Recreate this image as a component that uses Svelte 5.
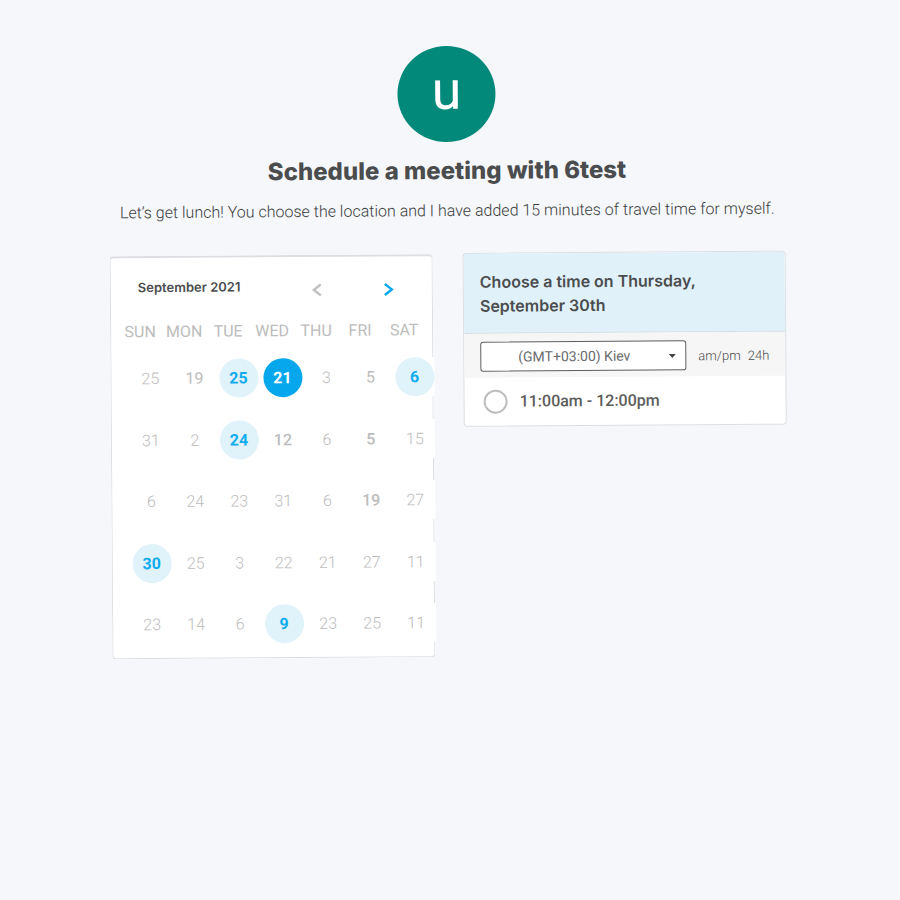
<script>
  const dayNames = ['SUN', 'MON', 'TUE', 'WED', 'THU', 'FRI', 'SAT'];
  // kind: open = bookable, picked = selected, mid / strong = darker disabled days
  const weeks = [
    [{ n: 25 }, { n: 19, kind: 'mid' }, { n: 25, kind: 'open' }, { n: 21, kind: 'picked' }, { n: 3 }, { n: 5, kind: 'mid' }, { n: 6, kind: 'open' }],
    [{ n: 31 }, { n: 2 }, { n: 24, kind: 'open' }, { n: 12, kind: 'strong' }, { n: 6 }, { n: 5, kind: 'strong' }, { n: 15 }],
    [{ n: 6 }, { n: 24 }, { n: 23 }, { n: 31 }, { n: 6 }, { n: 19, kind: 'strong' }, { n: 27 }],
    [{ n: 30, kind: 'open' }, { n: 25 }, { n: 3 }, { n: 22 }, { n: 21 }, { n: 27 }, { n: 11 }],
    [{ n: 23 }, { n: 14 }, { n: 6 }, { n: 9, kind: 'open' }, { n: 23 }, { n: 25 }, { n: 11 }]
  ];
</script>

<main>
  <header>
    <div class="avatar">u</div>
    <h1>Schedule a meeting with 6test</h1>
    <p>Let’s get lunch! You choose the location and I have added 15 minutes of travel time for myself.</p>
  </header>

  <div class="columns">
    <section class="card calendar">
      <div class="month">
        <h2>September 2021</h2>
        <div class="arrows">
          <button type="button" class="prev" aria-label="Previous month">
            <svg width="12" height="14" viewBox="0 0 12 14"><path d="M10 1.5 3 7l7 5.5" /></svg>
          </button>
          <button type="button" class="next" aria-label="Next month">
            <svg width="12" height="14" viewBox="0 0 12 14"><path d="M2 1.5 9 7l-7 5.5" /></svg>
          </button>
        </div>
      </div>
      <table>
        <thead>
          <tr>{#each dayNames as name}<th scope="col">{name}</th>{/each}</tr>
        </thead>
        <tbody>
          {#each weeks as week}
            <tr>
              {#each week as day}
                <td>
                  <button type="button" class="day {day.kind ?? ''}"><span>{day.n}</span></button>
                </td>
              {/each}
            </tr>
          {/each}
        </tbody>
      </table>
    </section>

    <section class="card times">
      <h2>Choose a time on Thursday, September 30th</h2>
      <div class="zone">
        <div class="picker">
          <select aria-label="Time zone">
            <option>(GMT+03:00) Kiev</option>
          </select>
          <svg width="8" height="5" viewBox="0 0 8 5"><path d="M0.5 0.5h7L4 4.5z" /></svg>
        </div>
        <div class="formats">
          <button type="button">am/pm</button>
          <button type="button">24h</button>
        </div>
      </div>
      <label class="slot">
        <input type="radio" name="slot" />
        <span>11:00am - 12:00pm</span>
      </label>
    </section>
  </div>
</main>

<style>
  :global(body) {
    background: #f5f7fb;
  }

  main {
    box-sizing: border-box;
    max-width: 676px;
    margin: 0 auto;
    padding: 46px 0;
    font-family: Roboto, sans-serif;
    color: #4a4c4e;
    transform: rotate(-0.4deg);
    transform-origin: 50% 600px;
  }

  button {
    padding: 0;
    border: 0;
    background: none;
    font: inherit;
    color: inherit;
    cursor: pointer;
  }

  h1,
  h2,
  p {
    margin: 0;
  }

  header {
    display: flex;
    flex-direction: column;
    align-items: center;
    text-align: center;
  }

  .avatar {
    width: 98px;
    height: 96px;
    border-radius: 50%;
    background: #03897a;
    color: #fff;
    font-size: 54px;
    line-height: 90px;
  }

  h1 {
    margin-top: 14px;
    font: 800 24px/30px Inter, sans-serif;
  }

  p {
    margin-top: 13px;
    font-size: 16px;
    font-weight: 300;
    line-height: 24px;
    color: #3c3e40;
  }

  .columns {
    display: grid;
    grid-template-columns: 1fr 1fr;
    align-items: start;
    gap: 30px;
    margin-top: 30px;
  }

  .card {
    box-sizing: border-box;
    min-width: 0;
    border: 1px solid #dcdfe2;
    border-radius: 4px;
    background: #fff;
  }

  .calendar {
    margin-top: 1px;
    padding: 19px 0 14px;
    border-top: 2px solid #dcdee1;
  }

  .month {
    display: flex;
    align-items: flex-start;
    justify-content: space-between;
    padding: 0 37px 0 27px;
  }

  .month h2 {
    font: 600 13px/20px Inter, sans-serif;
  }

  .arrows {
    display: flex;
    gap: 60px;
    padding-top: 7px;
  }

  .arrows button {
    display: flex;
  }

  .arrows path {
    fill: none;
    stroke: #bfbfbf;
    stroke-width: 2.4;
  }

  .arrows .next path {
    stroke: #06a7ec;
  }

  table,
  thead,
  tbody {
    display: block;
  }

  table {
    margin-top: 24px;
  }

  tr {
    display: flex;
  }

  thead {
    margin-left: 7px;
  }

  th,
  td {
    flex: none;
    display: flex;
    justify-content: center;
    width: 44px;
    padding: 0;
  }

  th {
    font-size: 16px;
    font-weight: 400;
    line-height: 20px;
    color: #bdbdbd;
  }

  tbody {
    display: flex;
    flex-direction: column;
    justify-content: space-between;
    height: 285px;
    margin: 17px 0 0 17px;
  }

  .day {
    width: 39px;
    height: 39px;
    background: #fff;
    font-size: 16px;
    font-weight: 300;
    line-height: 39px;
    color: #bcbcbc;
  }

  .day span {
    display: block;
    border-radius: 50%;
  }

  .mid {
    font-weight: 400;
  }

  .strong {
    font-weight: 500;
  }

  .open,
  .picked {
    color: #10acee;
    font-weight: 700;
  }

  .open span {
    background: #e0f2fa;
  }

  .picked span {
    background: #06a7ec;
    color: #fff;
  }

  .times {
    overflow: hidden;
  }

  .times h2 {
    padding: 16px 16px 15px;
    border-bottom: 1px solid #d3dfe4;
    background: #e0f1f9;
    font: 600 16px/24px Inter, sans-serif;
  }

  .zone {
    display: flex;
    align-items: center;
    justify-content: space-between;
    padding: 8px 16px 6px;
    background: #f6f6f6;
  }

  .picker {
    display: flex;
    align-items: center;
    width: 206px;
  }

  select {
    box-sizing: border-box;
    width: 100%;
    height: 30px;
    padding: 0 18px 0 0;
    border: 1px solid #5c5e60;
    border-radius: 3px;
    background: #fff;
    appearance: none;
    font: 400 14px/20px Roboto, sans-serif;
    color: #6a6c6e;
    text-align: center;
    text-align-last: center;
  }

  .picker svg {
    flex: none;
    margin-left: -18px;
    fill: #444;
    pointer-events: none;
    position: relative;
  }

  .formats {
    display: flex;
    gap: 7px;
    font-size: 13px;
    font-weight: 300;
    color: #4c4c4c;
  }

  .slot {
    display: flex;
    align-items: center;
    gap: 12px;
    padding: 12px 19px;
    font: 500 16px/24px Roboto, sans-serif;
    color: #5c5c5c;
  }

  .slot input {
    appearance: none;
    box-sizing: border-box;
    width: 24px;
    height: 24px;
    margin: 0;
    border: 2px solid #bdbdbd;
    border-radius: 50%;
  }
</style>
